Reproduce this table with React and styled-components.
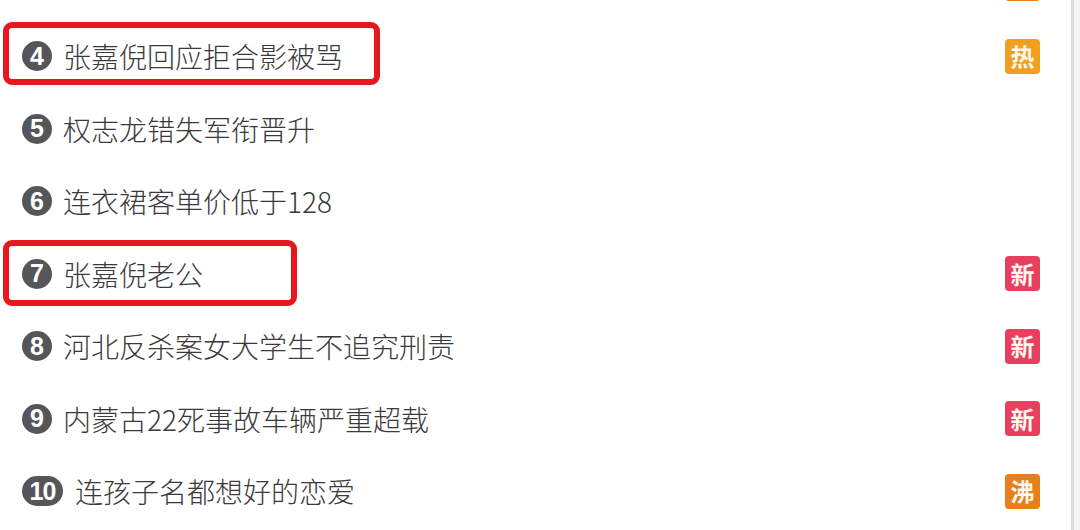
import React from 'react';
import styled, { createGlobalStyle } from 'styled-components';

const GlobalStyle = createGlobalStyle`
  html, body {
    margin: 0;
    padding: 0;
    background: #ffffff;
    overflow: hidden;
  }
  body {
    font-family: "Noto Sans CJK SC", "Noto Sans", sans-serif;
  }
`;

const Page = styled.div`
  width: 1080px;
  height: 530px;
  display: flex;
  overflow: hidden;
  background: #ffffff;
`;

const List = styled.ul`
  flex: 1;
  list-style: none;
  margin: -52.75px 0 0;
  padding: 0 31px 0 22px;
`;

const Row = styled.li`
  position: relative;
  height: 72.5px;
  display: flex;
  align-items: center;
`;

const Rank = styled.span`
  flex: none;
  height: 30px;
  min-width: ${p => (p.wide ? '41px' : '30px')};
  box-sizing: border-box;
  border-radius: 15px;
  background: #55565a;
  color: #ffffff;
  font-family: "Liberation Sans", Arial, sans-serif;
  font-weight: 700;
  font-size: 25px;
  letter-spacing: ${p => (p.wide ? '-1px' : '0')};
  display: flex;
  align-items: center;
  justify-content: center;
  margin-right: ${p => (p.wide ? '12px' : '11px')};
`;

const Title = styled.span`
  flex: 1;
  font-size: 28px;
  font-weight: 300;
  color: #3a3a3a;
  line-height: 1;
  white-space: nowrap;
`;

const badgeColors = {
  热: '#f0a01e',
  新: '#e6405e',
  沸: '#e67f1c',
};

const Badge = styled.span`
  flex: none;
  width: 35px;
  height: 35px;
  border-radius: 4px;
  background: ${p => badgeColors[p.kind]};
  color: #fff8ee;
  font-size: 24px;
  font-weight: 700;
  display: flex;
  align-items: center;
  justify-content: center;
  line-height: 1;
  margin-left: auto;
`;

const Highlight = styled.span`
  position: absolute;
  left: -19px;
  top: ${p => p.top}px;
  width: ${p => p.width}px;
  height: ${p => p.height}px;
  box-sizing: border-box;
  border: 6px solid #e8161d;
  border-radius: 9px;
  pointer-events: none;
`;

const Scrollbar = styled.div`
  flex: none;
  width: 6px;
  border-left: 3px solid #dcdcdc;
  background: #f4f4f4;
`;

const items = [
  { n: 3, badge: '沸', hidden: true },
  { n: 4, title: '张嘉倪回应拒合影被骂', badge: '热', box: { width: 377, top: 2, height: 63 } },
  { n: 5, title: '权志龙错失军衔晋升' },
  { n: 6, title: '连衣裙客单价低于128' },
  { n: 7, title: '张嘉倪老公', badge: '新', box: { width: 294, top: 3, height: 66 } },
  { n: 8, title: '河北反杀案女大学生不追究刑责', badge: '新' },
  { n: 9, title: '内蒙古22死事故车辆严重超载', badge: '新' },
  { n: 10, title: '连孩子名都想好的恋爱', badge: '沸' },
];

export default function App() {
  return (
    <Page>
      <GlobalStyle />
      <List>
        {items.map(item => (
          <Row key={item.n}>
            {item.box && <Highlight {...item.box} />}
            {!item.hidden && <Rank wide={item.n >= 10}>{item.n}</Rank>}
            {!item.hidden && <Title>{item.title}</Title>}
            {item.badge && <Badge kind={item.badge}>{item.hidden ? '' : item.badge}</Badge>}
          </Row>
        ))}
      </List>
      <Scrollbar />
    </Page>
  );
}
